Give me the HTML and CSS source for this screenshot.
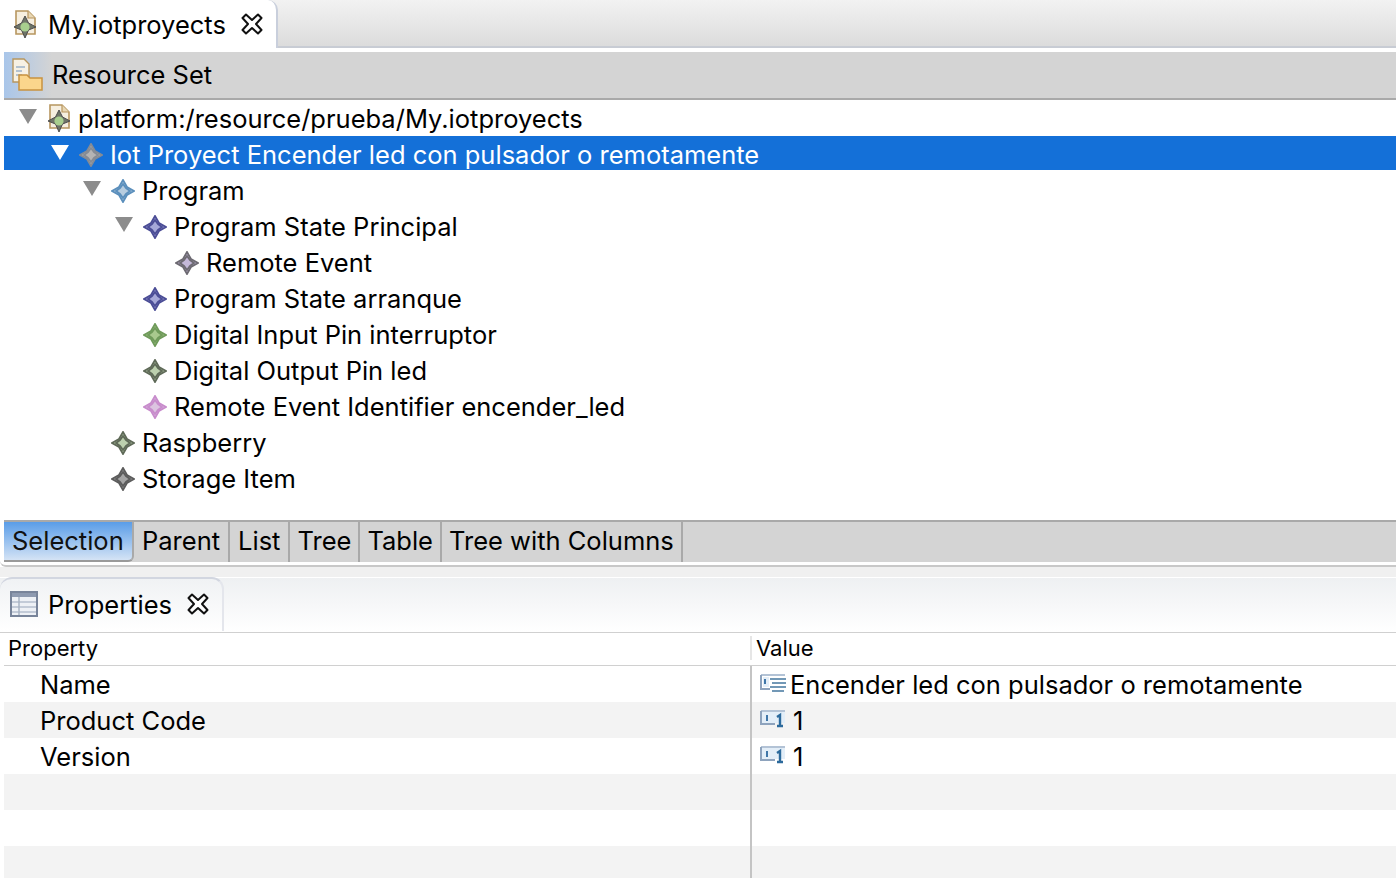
FILE: index.html
```html
<!DOCTYPE html>
<html lang="es">
<head>
  <meta charset="UTF-8">
  <title>My.iotproyects</title>
  <link rel="stylesheet" href="styles.css">
</head>
<body>
  <svg class="defs" width="0" height="0">
    <symbol id="star" viewBox="0 0 24 24">
      <path d="M12 1 L16 8 L23 12 L16 16 L12 23 L8 16 L1 12 L8 8 Z"/>
      <path class="core" d="M12 5 L15 9 L19 12 L15 15 L12 19 L9 15 L5 12 L9 9 Z"/>
    </symbol>
    <symbol id="file" viewBox="0 0 24 28">
      <path d="M3 1 H15 L22 8 V24 H3 Z" fill="#f6efe0" stroke="#b7965f" stroke-width="1.6"/>
      <path d="M15 1 V8 H22" fill="#e8d7b4" stroke="#b7965f" stroke-width="1.2"/>
      <path d="M12 6 L15.5 13 L23 17 L15.5 20 L12 28 L8.5 20 L1 17 L8.5 13 Z" fill="#6f7568" stroke="#4d4d4d" stroke-width="1"/>
      <circle cx="12" cy="17" r="4.6" fill="#a8cf8e"/>
    </symbol>
    <symbol id="close" viewBox="0 0 22 22">
      <path d="M1.5 5 L5 1.5 L11 7 L17 1.5 L20.5 5 L15 11 L20.5 17 L17 20.5 L11 15 L5 20.5 L1.5 17 L7 11 Z" fill="#fff" stroke="#111" stroke-width="2" stroke-linejoin="round"/>
    </symbol>
    <symbol id="val" viewBox="0 0 26 20">
      <rect x="2" y="3" width="23" height="11" fill="#e3eef8"/>
      <path d="M1 2 H25" stroke="#b3c3d6" stroke-width="2"/>
      <path d="M1 2 V15 H15" fill="none" stroke="#8ea3bd" stroke-width="2"/>
      <path d="M7 6 V12" stroke="#3f76a8" stroke-width="2"/>
      <path d="M17 8 L20 6 V17 M17 17 H23" fill="none" stroke="#2c6a9c" stroke-width="2.4"/>
    </symbol>
  </svg>

  <div class="editor-tabs">
    <div class="editor-tab">
      <svg class="file-icon"><use href="#file"/></svg>
      <span>My.iotproyects</span>
      <svg class="close-icon"><use href="#close"/></svg>
    </div>
  </div>

  <div class="editor">
    <div class="res-header">
      <div class="res-icon">
        <svg width="34" height="34" viewBox="0 0 34 34">
          <path d="M3 1 H14 L19 6 V24 H3 Z" fill="#f7f1e4" stroke="#b7965f" stroke-width="1.4"/>
          <path d="M6 9 H15 M6 13 H12 M6 17 H12" stroke="#9db2c9" stroke-width="1.4"/>
          <path d="M9 17 H17 L20 20 H32 V32 H9 Z" fill="#fbd68c" stroke="#c9923f" stroke-width="1.5"/>
        </svg>
      </div>
      <span>Resource Set</span>
    </div>

    <ul class="tree">
      <li class="row l0"><i class="arrow"></i><svg class="file-icon"><use href="#file"/></svg><span>platform:/resource/prueba/My.iotproyects</span></li>
      <li class="row l1 selected"><i class="arrow"></i><svg class="star s-grey"><use href="#star"/></svg><span>Iot Proyect Encender led con pulsador o remotamente</span></li>
      <li class="row l2"><i class="arrow"></i><svg class="star s-blue"><use href="#star"/></svg><span>Program</span></li>
      <li class="row l3"><i class="arrow"></i><svg class="star s-indigo"><use href="#star"/></svg><span>Program State Principal</span></li>
      <li class="row l4"><i class="noarrow"></i><svg class="star s-lilac"><use href="#star"/></svg><span>Remote Event</span></li>
      <li class="row l3"><i class="noarrow"></i><svg class="star s-indigo"><use href="#star"/></svg><span>Program State arranque</span></li>
      <li class="row l3"><i class="noarrow"></i><svg class="star s-green"><use href="#star"/></svg><span>Digital Input Pin interruptor</span></li>
      <li class="row l3"><i class="noarrow"></i><svg class="star s-olive"><use href="#star"/></svg><span>Digital Output Pin led</span></li>
      <li class="row l3"><i class="noarrow"></i><svg class="star s-pink"><use href="#star"/></svg><span>Remote Event Identifier encender_led</span></li>
      <li class="row l2"><i class="noarrow"></i><svg class="star s-olive"><use href="#star"/></svg><span>Raspberry</span></li>
      <li class="row l2"><i class="noarrow"></i><svg class="star s-dark"><use href="#star"/></svg><span>Storage Item</span></li>
    </ul>

    <div class="viewer-tabs">
      <div class="vtab active">Selection</div>
      <div class="vtab">Parent</div>
      <div class="vtab">List</div>
      <div class="vtab tight">Tree</div>
      <div class="vtab tight">Table</div>
      <div class="vtab tight">Tree with Columns</div>
    </div>
  </div>

  <div class="props-tabs">
    <div class="props-tab">
      <svg class="table-icon" viewBox="0 0 28 26">
        <rect x="1" y="1" width="26" height="24" fill="#eef1f6" stroke="#78849a" stroke-width="2"/>
        <rect x="2" y="2" width="24" height="4" fill="#8e9ab0"/>
        <path d="M2 11 H26 M2 16 H26 M2 21 H26" stroke="#c3cbd8" stroke-width="2"/>
        <path d="M9 6 V24" stroke="#aab4c4" stroke-width="1.5"/>
      </svg>
      <span>Properties</span>
      <svg class="close-icon"><use href="#close"/></svg>
    </div>
  </div>

  <div class="props">
    <div class="props-head">
      <div class="col-prop">Property</div>
      <div class="head-val">Value</div>
    </div>
    <div class="prow">
      <div class="col-prop name">Name</div>
      <div class="col-val">
        <svg class="val-icon" viewBox="0 0 26 20">
          <path d="M1 2 H25" stroke="#b3c3d6" stroke-width="2"/>
          <path d="M1 2 V16 H10" fill="none" stroke="#8ea3bd" stroke-width="2"/>
          <rect x="3" y="4" width="6" height="10" fill="#e3eef8"/>
          <path d="M5 6 V11" stroke="#3f76a8" stroke-width="2"/>
          <path d="M10 6 H26 M12 10 H26 M10 14 H26 M12 18 H24" stroke="#44779f" stroke-width="1.6"/>
        </svg>
        <span>Encender led con pulsador o remotamente</span>
      </div>
    </div>
    <div class="prow alt">
      <div class="col-prop name">Product Code</div>
      <div class="col-val"><svg class="val-icon"><use href="#val"/></svg><span class="num">1</span></div>
    </div>
    <div class="prow">
      <div class="col-prop name">Version</div>
      <div class="col-val"><svg class="val-icon"><use href="#val"/></svg><span class="num">1</span></div>
    </div>
    <div class="prow alt"><div class="col-prop"></div><div class="col-val"></div></div>
    <div class="prow"><div class="col-prop"></div><div class="col-val"></div></div>
    <div class="prow alt"><div class="col-prop"></div><div class="col-val"></div></div>
  </div>
</body>
</html>
```

FILE: styles.css
```css
html, body {
  margin: 0;
  height: 878px;
  overflow: hidden;
}
body {
  font-family: Inter, "Liberation Sans", sans-serif;
  font-size: 25.5px;
  color: #000;
  background: #fff;
}
.defs { position: absolute; }

/* editor tab bar */
.editor-tabs {
  height: 48px;
  box-sizing: border-box;
  background: linear-gradient(#f2f2f2, #dcdcdc);
  border-bottom: 2px solid #c8ccd4;
  display: flex;
}
.editor-tab {
  width: 278px;
  height: 48px;
  box-sizing: border-box;
  background: #fff;
  border-right: 2px solid #c9cfdc;
  border-top-right-radius: 10px;
  display: flex;
  align-items: center;
  padding-left: 13px;
}
.editor-tab .file-icon { margin-right: 11px; }
.editor-tab .close-icon { margin-left: 15px; }
.file-icon { width: 24px; height: 28px; flex: none; }
.close-icon { width: 22px; height: 22px; flex: none; }

.editor {
  padding: 4px 0 3px 4px;
  border-bottom: 2px solid #c8c8c8;
  border-bottom-left-radius: 6px;
}

.res-header {
  height: 48px;
  box-sizing: border-box;
  background: #d4d4d4;
  border-bottom: 2px solid #a9a9a9;
  padding-bottom: 1px;
  display: flex;
  align-items: center;
}
.res-icon {
  width: 48px;
  height: 46px;
  margin-bottom: -1px;
  background: linear-gradient(90deg, #a9c6ea, #d4d4d4);
  display: flex;
  align-items: center;
  padding-left: 6px;
  box-sizing: border-box;
}

/* tree */
.tree {
  list-style: none;
  margin: 0;
  padding: 0;
  height: 420px;
  box-sizing: border-box;
}
.row {
  height: 36px;
  display: flex;
  align-items: center;
  white-space: nowrap;
}
.row span { margin-left: 7px; }
.row.selected {
  height: 34px;
  box-sizing: border-box;
  padding-top: 2px;
  margin-bottom: 2px;
  background: #1470d8;
  color: #fff;
}
.row.selected .arrow { border-top-color: #fff; margin-top: -4px; }
.l0 { padding-left: 15px; }
.l1 { padding-left: 47px; }
.l2 { padding-left: 79px; }
.l3 { padding-left: 111px; }
.l4 { padding-left: 143px; }
.arrow {
  width: 0;
  height: 0;
  flex: none;
  margin-right: 10px;
  margin-top: -3px;
  border-left: 9px solid transparent;
  border-right: 9px solid transparent;
  border-top: 15px solid #8c8c8c;
}
.noarrow { width: 18px; margin-right: 10px; flex: none; }
.star { width: 24px; height: 24px; flex: none; margin-top: 2px; stroke-width: 1.8; }
.star .core { stroke: none; }
.s-grey { fill: #b4b4b4; stroke: #858b94; }
.s-blue { fill: #b7cde0; stroke: #5b8fbc; }
.s-indigo { fill: #a6a8d8; stroke: #4b4d96; }
.s-lilac { fill: #c4b8d8; stroke: #6d6a72; }
.s-green { fill: #a9c98e; stroke: #6f9a5a; }
.s-olive { fill: #bcd0ae; stroke: #5f6a58; }
.s-pink { fill: #dcc4e0; stroke: #c88ccc; }
.s-dark { fill: #a5a5a5; stroke: #5c5c5c; }

/* bottom tabs of the editor */
.viewer-tabs {
  height: 42px;
  box-sizing: border-box;
  background: #d4d4d4;
  border-top: 2px solid #a9a9a9;
  display: flex;
}
.vtab {
  padding: 0 8px;
  border-right: 2px solid #a9a9a9;
  line-height: 38px;
}
.vtab.tight { padding: 0 7px; }
.vtab.active {
  width: 130px;
  box-sizing: border-box;
  background: linear-gradient(#5a9de8, #d4e3f5);
  border-bottom: 2px solid #9a9a9a;
  border-bottom-right-radius: 6px;
  color: #111;
}

/* properties view */
.props-tabs {
  height: 66px;
  padding-top: 10px;
  box-sizing: border-box;
  background: linear-gradient(#f0f0f0 10px, #fff 10px, #fff 11px, #eef0f2 11px, #fff 100%);
  border-bottom: 1px solid #d0d0d0;
}
.props-tab {
  width: 224px;
  height: 54px;
  box-sizing: border-box;
  background: linear-gradient(#f0f2f4, #fff);
  border-top: 2px solid #d2d6e0;
  border-right: 2px solid #e4e6ec;
  border-top-right-radius: 12px;
  border-top-left-radius: 12px;
  display: flex;
  align-items: center;
  padding: 0 0 2px 10px;
}
.table-icon { width: 28px; height: 26px; margin-right: 10px; flex: none; }
.props-tab .close-icon { margin-left: 15px; }

.props { padding-left: 4px; }
.props-head {
  height: 30px;
  padding-bottom: 2px;
  display: flex;
  font-size: 22px;
  align-items: center;
  border-bottom: 1px solid #d0d0d0;
}
.props-head .col-prop { padding-left: 4px; }
.head-val { padding-left: 4px; border-left: 2px solid #e6e6e6; height: 24px; line-height: 24px; }
.prow {
  height: 36px;
  display: flex;
}
.prow.alt { background: #f3f3f3; }
.col-prop { width: 746px; box-sizing: border-box; flex: none; }
.name { padding: 1px 0 0 36px; line-height: 36px; }
.col-val { flex: 1; display: flex; align-items: center; }
.prow .col-val { border-left: 2px solid #c4c4c4; padding-left: 8px; }
.val-icon { width: 26px; height: 20px; flex: none; margin-top: -2px; }
.col-val span { margin-left: 4px; }
.col-val .num { margin-left: 7px; }
```
